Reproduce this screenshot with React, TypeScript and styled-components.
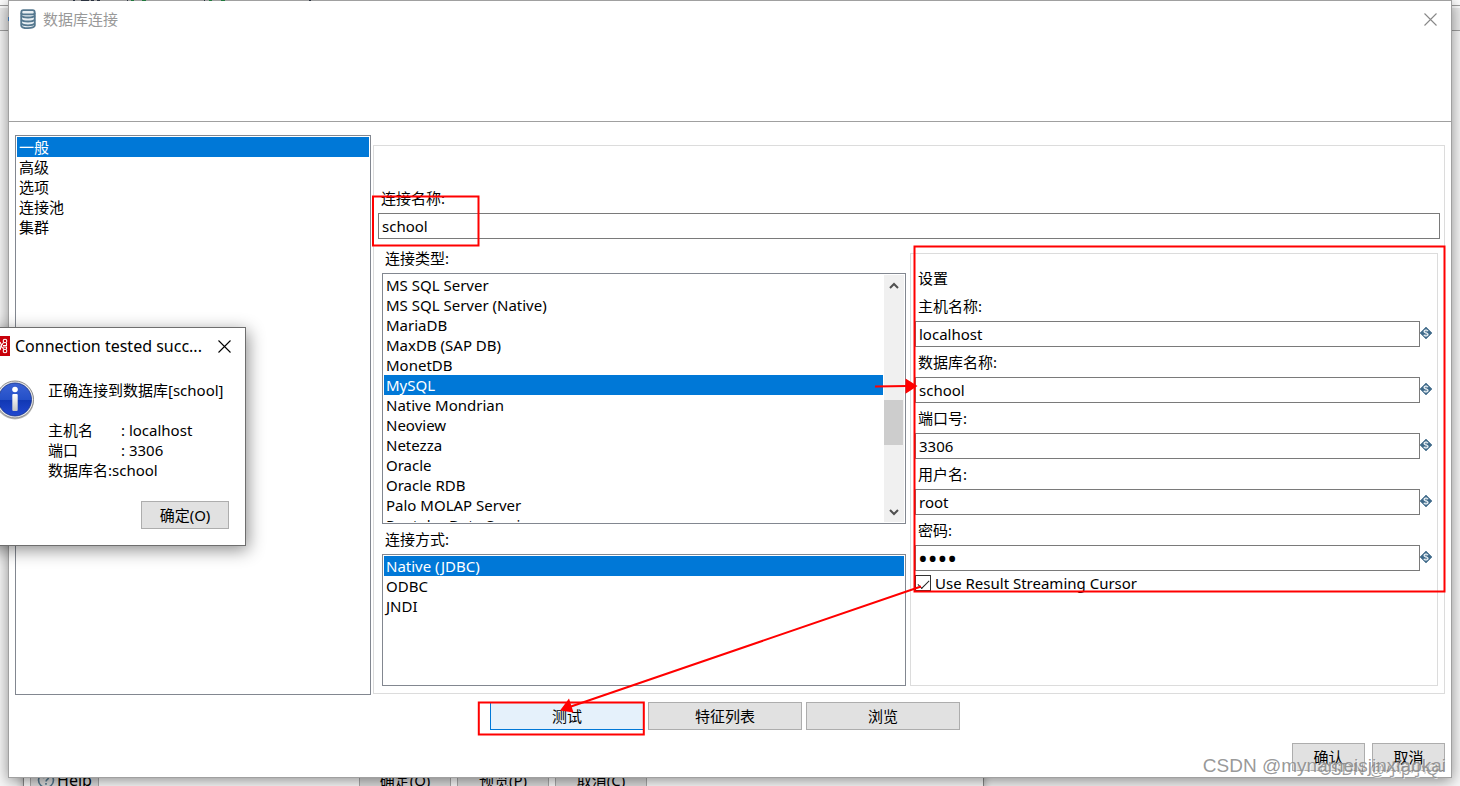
import React from 'react';
import styled, { createGlobalStyle, css } from 'styled-components';

const Global = createGlobalStyle`
  * { box-sizing: border-box; }
  body {
    margin: 0;
    color: #000;
    background: #f8f8f8;
    font: 15px/20px "Noto Sans", "Noto Sans CJK SC", sans-serif;
  }
  button, input { font: inherit; color: inherit; }
`;

const Desktop = styled.div`
  position: relative;
  min-height: 100vh;
  overflow: hidden;
`;

/* ---------- application behind the dialog ---------- */

const AppToolbar = styled.div`
  height: 6px;
  background: #fff;
  border-bottom: 1px solid #a0a0a0;
`;

const AppTabs = styled.div`
  height: 25px;
  border-top: 2px solid #fff;
  border-bottom: 1px solid #a0a0a0;
  background: #ececec;
`;

const StepWindow = styled.div`
  position: absolute;
  left: 23px;
  bottom: -20px;
  width: 961px;
  height: 60px;
  padding: 0 336px 11px 6px;
  display: flex;
  align-items: flex-end;
  gap: 6px;
  border: 1px solid #8a8a8a;
  background: #fff;
  box-shadow: 0 0 8px rgba(0, 0, 0, 0.3);
`;

const StepSpacer = styled.div`
  flex: 1;
`;

/* ---------- shared controls ---------- */

const Button = styled.button<{ $width: number; $hot?: boolean }>`
  width: ${(p) => p.$width}px;
  height: 28px;
  padding: 0;
  flex: none;
  display: flex;
  align-items: center;
  justify-content: center;
  gap: 2px;
  border: 1px solid ${(p) => (p.$hot ? '#0078d7' : '#adadad')};
  background: ${(p) => (p.$hot ? '#e5f1fb' : '#e1e1e1')};
`;

const HelpText = styled.span`
  font-size: 16px;
`;

const CloseButton = styled.button<{ $color: string }>`
  width: 20px;
  height: 20px;
  padding: 0;
  display: flex;
  align-items: center;
  justify-content: center;
  border: 0;
  background: none;
  color: ${(p) => p.$color};
`;

const TextBox = styled.input`
  flex: 1;
  min-width: 0;
  width: 100%;
  height: 26px;
  padding: 0 3px;
  border: 1px solid #7a7a7a;
  border-radius: 0;
  background: #fff;
  outline: 0;

  &[type='password'] {
    padding: 0 2px;
    font-size: 26px;
    line-height: 24px;
  }
`;

const Label = styled.label`
  display: block;
  padding: 0 3px;
  margin-bottom: 6px;
  line-height: 18px;
`;

/* ---------- database dialog ---------- */

const Dialog = styled.section`
  position: absolute;
  top: 0;
  left: 8px;
  right: 8px;
  min-height: calc(100vh - 8px);
  display: flex;
  flex-direction: column;
  border: 1px solid #a0a0a0;
  background: #fff;
  box-shadow: 0 3px 14px rgba(0, 0, 0, 0.45);
`;

const DialogHeader = styled.header`
  height: 121px;
  padding: 8px 11px;
  display: flex;
  align-items: flex-start;
  gap: 7px;
  border-bottom: 1px solid #a0a0a0;
  color: #999;
`;

const DialogTitle = styled.h1`
  flex: 1;
  margin: 0;
  font: inherit;
`;

const DialogBody = styled.div`
  flex: 1;
  padding: 13px 6px 0;
  display: grid;
  grid-template-columns: 356px 1fr;
  gap: 2px;
`;

const ListFrame = styled.div<{ $height?: number }>`
  display: flex;
  padding: 1px;
  border: 1px solid #828790;
  background: #fff;
  overflow: hidden;
  ${(p) => p.$height && css`height: ${p.$height}px;`}
`;

const List = styled.ul`
  flex: 1;
  min-width: 0;
  margin: 0;
  padding: 0;
  list-style: none;
  overflow: hidden;
`;

const ListRow = styled.li<{ $selected?: boolean }>`
  height: 20px;
  padding: 0 2px;
  white-space: nowrap;
  color: ${(p) => (p.$selected ? '#fff' : '#000')};
  background: ${(p) => (p.$selected ? '#0078d7' : 'transparent')};
`;

const Scrollbar = styled.div`
  width: 20px;
  margin-left: 1px;
  display: flex;
  flex-direction: column;
  align-items: center;
  background: #f0f0f0;
  color: #505050;
`;

const ScrollArrow = styled.button`
  width: 20px;
  height: 20px;
  padding: 0;
  display: flex;
  align-items: center;
  justify-content: center;
  border: 0;
  background: none;
`;

const ScrollTrack = styled.div`
  flex: 1;
  width: 20px;
  padding-top: 105px;
`;

const ScrollThumb = styled.div`
  width: 19px;
  height: 45px;
  background: #cdcdcd;
`;

const GeneralPanel = styled.div`
  margin: 10px 0 1px;
  padding: 43px 4px 6px;
  border: 1px solid #dcdcdc;
`;

const Columns = styled.div`
  display: grid;
  grid-template-columns: 524fr 528fr;
  gap: 4px;
  padding: 10px 2px 0 4px;
`;

const Stack = styled.div<{ $gap: number }>`
  display: flex;
  flex-direction: column;
  gap: ${(p) => p.$gap}px;
`;

const SettingsPanel = styled.fieldset`
  min-width: 0;
  margin: 4px 0 0;
  padding: 15px 5px 0 4px;
  border: 1px solid #dcdcdc;
`;

const SettingsTitle = styled.div`
  padding: 0 3px;
  margin-bottom: 10px;
  line-height: 18px;
`;

const FieldRow = styled.div`
  display: flex;
  align-items: flex-start;
`;

const VariableMark = styled.svg`
  flex: none;
  width: 12px;
  height: 12px;
  margin-top: 6px;
`;

const CheckLabel = styled.label`
  display: flex;
  align-items: center;
  gap: 4px;
  margin-top: 2px;
`;

const CheckBox = styled.input`
  appearance: none;
  width: 16px;
  height: 16px;
  margin: 0;
  display: grid;
  place-items: center;
  border: 1px solid #333;
  background: #fff;

  &:checked::before {
    content: '';
    width: 10px;
    height: 5px;
    border-left: 1px solid #222;
    border-bottom: 1px solid #222;
    transform: rotate(-45deg);
  }
`;

const ActionRow = styled.div`
  display: flex;
  justify-content: center;
  gap: 4px;
  padding: 7px 10px 0 0;
`;

const ConfirmRow = styled.footer`
  display: flex;
  justify-content: flex-end;
  gap: 7px;
  padding: 13px 6px 6px;
`;

/* ---------- message box ---------- */

const MessageBox = styled.section`
  position: absolute;
  top: 327px;
  left: -18px;
  width: 264px;
  padding: 8px 11px 16px 7px;
  border: 1px solid #6e6e6e;
  background: #fff;
  box-shadow: 2px 4px 16px rgba(0, 0, 0, 0.45);
`;

const MessageHeader = styled.header`
  display: flex;
  align-items: center;
  gap: 5px;
`;

const MessageTitle = styled.h2`
  flex: 1;
  min-width: 0;
  margin: 0;
  font: inherit;
  font-size: 16px;
  white-space: nowrap;
`;

const MessageContent = styled.div`
  display: flex;
  align-items: flex-start;
  gap: 13px;
  padding: 24px 0 21px 5px;
`;

const MessageText = styled.div`
  white-space: nowrap;
`;

const MessageLine = styled.div<{ $spaced?: boolean }>`
  display: flex;
  margin-bottom: ${(p) => (p.$spaced ? 20 : 0)}px;
`;

const MessageKey = styled.span<{ $wide?: boolean }>`
  width: ${(p) => (p.$wide ? '73px' : 'auto')};
`;

const MessageActions = styled.div`
  display: flex;
  justify-content: flex-end;
  padding-right: 5px;
`;

/* ---------- marks drawn over the windows ---------- */

const Markup = styled.svg`
  position: absolute;
  top: 0;
  left: 0;
  pointer-events: none;
`;

const Watermark = styled.div<{ $small?: boolean }>`
  position: absolute;
  right: ${(p) => (p.$small ? 16 : 14)}px;
  bottom: ${(p) => (p.$small ? 4 : 8)}px;
  font: ${(p) => (p.$small ? 16 : 19)}px/24px "Liberation Sans", "Noto Sans CJK SC", sans-serif;
  color: ${(p) => (p.$small ? 'rgba(110,110,110,.7)' : 'rgba(140,140,140,.9)')};
  text-shadow: 1px 1px 0 rgba(255, 255, 255, 0.6);
  pointer-events: none;
  white-space: nowrap;
`;

const Cross = ({ size }: { size: number }) => (
  <svg width={size} height={size} viewBox="0 0 13 13" fill="none" stroke="currentColor" strokeWidth="1.1">
    <path d="M.5 .5l12 12M12.5 .5l-12 12" />
  </svg>
);

const Chevron = ({ up }: { up?: boolean }) => (
  <svg width="10" height="7" viewBox="0 0 10 7" fill="none" stroke="currentColor" strokeWidth="2">
    <path d={up ? 'M1 6l4-4 4 4' : 'M1 1l4 4 4-4'} />
  </svg>
);

const DatabaseIcon = () => (
  <svg width="16" height="20" viewBox="0 0 16 20" fill="#e9eff3" stroke="#55788f" strokeWidth="1.8">
    <path d="M1.200 3.800v12.600c0 1.600 3 2.700 6.800 2.700s6.800-1.100 6.800-2.700V3.800" />
    <path d="M1.200 6.600c1 1.200 3.600 1.900 6.800 1.900s5.800-.7 6.800-1.900M1.200 10.600c1 1.200 3.600 1.900 6.800 1.900s5.800-.7 6.800-1.900M1.200 14.400c1 1.200 3.600 1.900 6.800 1.900s5.800-.7 6.800-1.900" fill="none" />
    <rect x="1.300" y="1.200" width="13.400" height="4.200" rx="2.100" />
  </svg>
);

const VariableIcon = () => (
  <VariableMark viewBox="0 0 12 12" aria-hidden="true">
    <path d="M6 0l6 6-6 6-6-6z" fill="#3f6a8a" stroke="#3f6a8a" strokeWidth=".6" />
    <path d="M8 4.300C7.600 3.400 6.900 3.100 6 3.100c-1.100 0-1.900.5-1.900 1.300C4.100 6.200 8 5.500 8 7.500c0 .9-.9 1.400-2 1.400-1 0-1.800-.4-2.100-1.200" fill="none" stroke="#e6eef3" strokeWidth="1.400" />
    <path d="M6 2v8" fill="none" stroke="#c3d1db" strokeWidth=".8" />
  </VariableMark>
);

const SpoonIcon = () => (
  <svg width="20" height="20" viewBox="0 0 20 20" fill="none" stroke="#fff" strokeWidth="1.100">
    <path d="M0 0h20v20H0z" fill="#c8000a" stroke="none" />
    <circle cx="15" cy="5" r="1.800" />
    <circle cx="15" cy="15" r="1.800" />
    <circle cx="5" cy="5" r="1.800" />
    <circle cx="5" cy="15" r="1.800" />
    <path d="M10 6l1.500 3-1.500 5M11.500 9.500l2-3M11.500 10.500l2.500 3M13 9.500h3.500V7M13 11h3.500v2M6.500 6.500L10 10l-3.500 3.500" />
  </svg>
);

const InfoIcon = () => (
  <svg width="40" height="40" viewBox="0 0 40 40">
    <defs>
      <linearGradient id="infoBlue" x1="0" y1="0" x2="0" y2="1">
        <stop offset="0" stopColor="#3a62d4" />
        <stop offset=".5" stopColor="#2450c8" />
        <stop offset=".52" stopColor="#1138b4" />
        <stop offset="1" stopColor="#2148d0" />
      </linearGradient>
      <linearGradient id="infoSilver" x1="0" y1="0" x2="0" y2="1">
        <stop offset="0" stopColor="#fff" />
        <stop offset="1" stopColor="#c4c4c4" />
      </linearGradient>
    </defs>
    <circle cx="20" cy="20.500" r="19" fill="#bdbdbd" />
    <circle cx="20" cy="19.500" r="18.500" fill="#e8e8e8" stroke="#8c8c8c" />
    <circle cx="20" cy="19.500" r="16.500" fill="url(#infoBlue)" stroke="#14308c" strokeWidth=".8" />
    <circle cx="20" cy="9.500" r="2.800" fill="#fff" />
    <rect x="17.300" y="14" width="5.400" height="17" rx="1" fill="url(#infoSilver)" />
  </svg>
);

const HelpIcon = () => (
  <svg width="18" height="18" viewBox="0 0 18 18" fill="none" stroke="#55788f" strokeWidth="1.600">
    <circle cx="9" cy="9" r="7.500" />
    <path d="M6.600 7.200c0-3.400 4.900-3.200 4.900-.4 0 1.700-2.400 1.700-2.400 3.700M9 12v1.700" />
  </svg>
);

const categories = ['一般', '高级', '选项', '连接池', '集群'];

const databaseTypes = [
  'MS SQL Server',
  'MS SQL Server (Native)',
  'MariaDB',
  'MaxDB (SAP DB)',
  'MonetDB',
  'MySQL',
  'Native Mondrian',
  'Neoview',
  'Netezza',
  'Oracle',
  'Oracle RDB',
  'Palo MOLAP Server',
  'Pentaho Data Services',
];

const accessMethods = ['Native (JDBC)', 'ODBC', 'JNDI'];

const fields = [
  { id: 'host', label: '主机名称:', value: 'localhost' },
  { id: 'database', label: '数据库名称:', value: 'school' },
  { id: 'port', label: '端口号:', value: '3306' },
  { id: 'user', label: '用户名:', value: 'root' },
  { id: 'password', label: '密码:', value: '1234', type: 'password' },
];

const Options = ({ items, selected, label }: { items: string[]; selected: string; label: string }) => (
  <List role="listbox" aria-label={label}>
    {items.map((item) => (
      <ListRow key={item} role="option" aria-selected={item === selected} $selected={item === selected}>
        {item}
      </ListRow>
    ))}
  </List>
);

export default function App() {
  return (
    <Desktop>
      <Global />
      <AppToolbar />
      <AppTabs />
      <StepWindow>
        <Button $width={69}>
          <HelpIcon />
          <HelpText>Help</HelpText>
        </Button>
        <StepSpacer />
        <Button $width={92}>确定(O)</Button>
        <Button $width={92}>预览(P)</Button>
        <Button $width={92}>取消(C)</Button>
      </StepWindow>

      <Dialog role="dialog" aria-labelledby="dialog-title">
        <DialogHeader>
          <DatabaseIcon />
          <DialogTitle id="dialog-title">数据库连接</DialogTitle>
          <CloseButton $color="#888" aria-label="关闭">
            <Cross size={13} />
          </CloseButton>
        </DialogHeader>

        <DialogBody>
          <ListFrame>
            <Options items={categories} selected="一般" label="分类" />
          </ListFrame>
          <GeneralPanel>
            <Label htmlFor="name">连接名称:</Label>
            <TextBox id="name" defaultValue="school" />
            <Columns>
              <Stack $gap={6}>
                <div>
                  <Label as="div">连接类型:</Label>
                  <ListFrame $height={251}>
                    <Options items={databaseTypes} selected="MySQL" label="连接类型" />
                    <Scrollbar>
                      <ScrollArrow aria-label="向上">
                        <Chevron up />
                      </ScrollArrow>
                      <ScrollTrack>
                        <ScrollThumb />
                      </ScrollTrack>
                      <ScrollArrow aria-label="向下">
                        <Chevron />
                      </ScrollArrow>
                    </Scrollbar>
                  </ListFrame>
                </div>
                <div>
                  <Label as="div">连接方式:</Label>
                  <ListFrame $height={132}>
                    <Options items={accessMethods} selected="Native (JDBC)" label="连接方式" />
                  </ListFrame>
                </div>
              </Stack>
              <SettingsPanel aria-label="设置">
                <SettingsTitle>设置</SettingsTitle>
                <Stack $gap={6}>
                  {fields.map((f) => (
                    <div key={f.id}>
                      <Label htmlFor={f.id}>{f.label}</Label>
                      <FieldRow>
                        <TextBox id={f.id} type={f.type ?? 'text'} defaultValue={f.value} />
                        <VariableIcon />
                      </FieldRow>
                    </div>
                  ))}
                </Stack>
                <CheckLabel>
                  <CheckBox type="checkbox" defaultChecked />
                  Use Result Streaming Cursor
                </CheckLabel>
              </SettingsPanel>
            </Columns>
          </GeneralPanel>
        </DialogBody>

        <ActionRow>
          <Button $width={154} $hot>测试</Button>
          <Button $width={154}>特征列表</Button>
          <Button $width={154}>浏览</Button>
        </ActionRow>
        <ConfirmRow>
          <Button $width={73}>确认</Button>
          <Button $width={73}>取消</Button>
        </ConfirmRow>
      </Dialog>

      <MessageBox role="alertdialog" aria-labelledby="message-title">
        <MessageHeader>
          <SpoonIcon />
          <MessageTitle id="message-title">Connection tested succ...</MessageTitle>
          <CloseButton $color="#000" aria-label="关闭">
            <Cross size={13} />
          </CloseButton>
        </MessageHeader>
        <MessageContent>
          <InfoIcon />
          <MessageText>
            <MessageLine $spaced>正确连接到数据库[school]</MessageLine>
            <MessageLine>
              <MessageKey $wide>主机名</MessageKey>: localhost
            </MessageLine>
            <MessageLine>
              <MessageKey $wide>端口</MessageKey>: 3306
            </MessageLine>
            <MessageLine>
              <MessageKey>数据库名</MessageKey>:school
            </MessageLine>
          </MessageText>
        </MessageContent>
        <MessageActions>
          <Button $width={88}>确定(O)</Button>
        </MessageActions>
      </MessageBox>

      {/* toolbar icons of the application that show past the dialog's edge */}
      <Markup width="320" height="30" viewBox="0 0 320 30" fill="none" aria-hidden="true">
        <path d="M73 .5h2M81 .5h8M91 .5h3M97 .5h3M127 .5h1M204 .5h1M309 .5h2" stroke="#2b3340" />
        <path d="M131 .5h3M142 .5h4M209 .5h3M221 .5h4" stroke="#1f7a3c" />
        <path d="M8.500 17v4" stroke="#3b6ea5" />
      </Markup>

      <Markup width="1460" height="786" viewBox="0 0 1460 786" fill="none" stroke="#f00" strokeWidth="2" aria-hidden="true">
        <rect x="373" y="196.500" width="105.500" height="49" />
        <rect x="914.500" y="246.500" width="530" height="345" />
        <rect x="478.800" y="702.500" width="165" height="32" />
        <path d="M875 386.500l32-.5M921 586.500L571 706.500" />
        <path d="M905.500 378.500l12 7.500-12 7.700zM560 710.500l9-12 4.500 14z" fill="#f00" stroke="none" />
      </Markup>
      <Watermark $small>CSDN @小p小Q-</Watermark>
      <Watermark>CSDN @mynameisjinxiaokai</Watermark>
    </Desktop>
  );
}
